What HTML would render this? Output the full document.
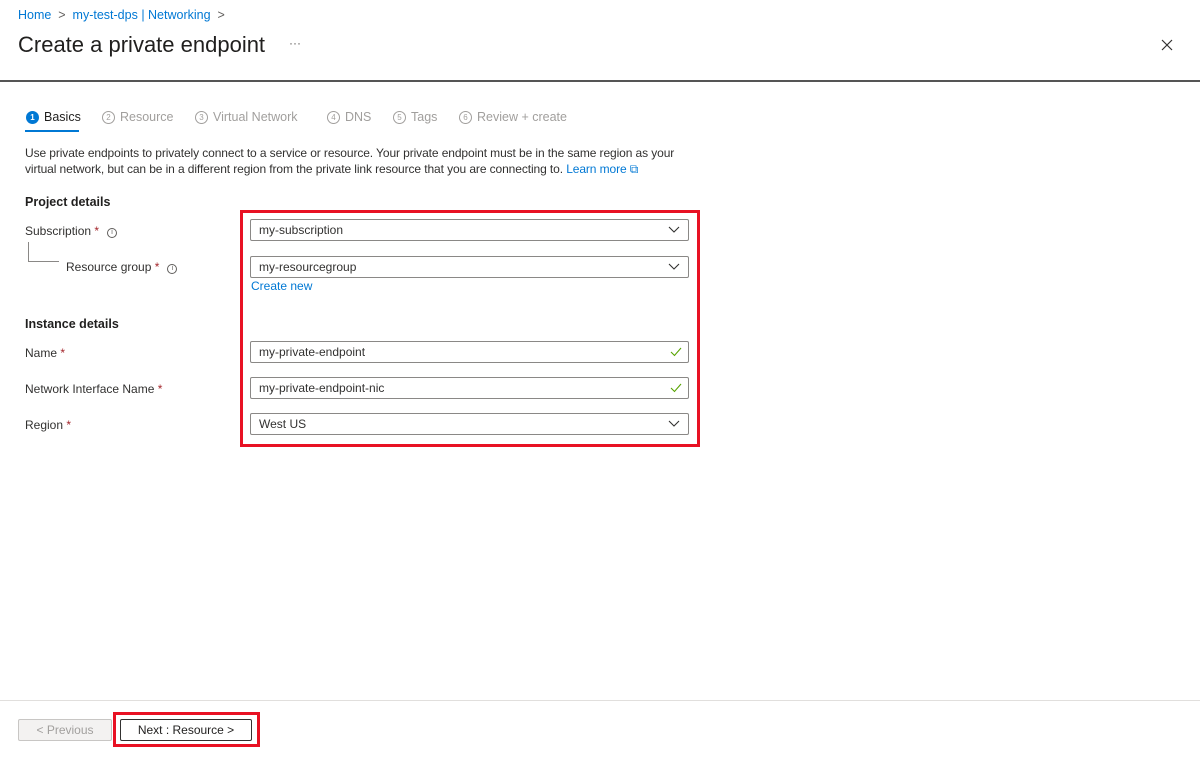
<!DOCTYPE html>
<html><head><style>
*{margin:0;padding:0;box-sizing:border-box}
body{width:1200px;height:763px;background:#fff;font-family:"Liberation Sans",sans-serif;color:#323130;position:relative;overflow:hidden;font-size:12px}
.a{position:absolute;white-space:nowrap}
.link{color:#0078d4}
.inp{position:absolute;left:250px;width:439px;height:22px;border:1px solid #8a8886;border-radius:2px;padding-left:8px;line-height:20px;font-size:12px}
.chev{position:absolute;right:8px;top:5px}
.chk{position:absolute;right:6px;top:4px}
.lbl{position:absolute;left:25px;font-size:12px}
.req{color:#a4262c}
.info{display:inline-block;width:10px;height:10px;border:1px solid #605e5c;border-radius:50%;font-size:7px;line-height:8px;text-align:center;color:#605e5c;vertical-align:1px;margin-left:8px}
.step{position:absolute;top:110px;color:#a19f9d;font-size:12.5px}
.num{display:inline-block;width:13px;height:13px;border:1px solid #a19f9d;border-radius:50%;font-size:8px;line-height:11px;text-align:center;vertical-align:1px;margin-right:5px}
</style></head><body>
<div class="a link" style="left:18px;top:8px;font-size:12.5px">Home <span style="color:#605e5c">&nbsp;&gt;&nbsp;</span> my-test-dps | Networking <span style="color:#605e5c">&nbsp;&gt;</span></div>
<div class="a" style="left:18px;top:32px;font-size:22px;color:#201f1e">Create a private endpoint</div>
<div class="a" style="left:289px;top:36px;font-size:12px;color:#605e5c">···</div>
<svg class="a" style="left:1161px;top:39px" width="12" height="12"><path d="M1 1L11 11M11 1L1 11" stroke="#323130" stroke-width="1.2"/></svg>
<div class="a" style="left:0;top:80px;width:1200px;height:2px;background:#555"></div>

<div class="step" style="left:26px;color:#201f1e"><span class="num" style="background:#0078d4;border-color:#0078d4;color:#fff;font-weight:bold">1</span>Basics</div>
<div class="a" style="left:25px;top:130px;width:54px;height:2px;background:#0078d4"></div>
<div class="step" style="left:102px"><span class="num">2</span>Resource</div>
<div class="step" style="left:195px"><span class="num">3</span>Virtual Network</div>
<div class="step" style="left:327px"><span class="num">4</span>DNS</div>
<div class="step" style="left:393px"><span class="num">5</span>Tags</div>
<div class="step" style="left:459px"><span class="num">6</span>Review + create</div>

<div class="a" style="left:25px;top:145px;font-size:12px;line-height:16px;letter-spacing:-0.1px">Use private endpoints to privately connect to a service or resource. Your private endpoint must be in the same region as your<br>virtual network, but can be in a different region from the private link resource that you are connecting to. <span class="link">Learn more ⧉</span></div>

<div class="a" style="left:25px;top:195px;font-size:12.5px;font-weight:bold;color:#201f1e">Project details</div>
<div class="lbl" style="top:224px">Subscription <span class="req">*</span><span class="info">i</span></div>
<div class="a" style="left:28px;top:242px;width:31px;height:20px;border-left:1px solid #8a8886;border-bottom:1px solid #8a8886"></div>
<div class="lbl" style="left:66px;top:260px">Resource group <span class="req">*</span><span class="info">i</span></div>

<div class="a" style="left:25px;top:317px;font-size:12.5px;font-weight:bold;color:#201f1e">Instance details</div>
<div class="lbl" style="top:346px">Name <span class="req">*</span></div>
<div class="lbl" style="top:382px">Network Interface Name <span class="req">*</span></div>
<div class="lbl" style="top:418px">Region <span class="req">*</span></div>

<div class="inp" style="top:219px">my-subscription<svg class="chev" width="12" height="10"><path d="M1 2L6 7L11 2" fill="none" stroke="#323130" stroke-width="1.1"/></svg></div>
<div class="inp" style="top:256px">my-resourcegroup<svg class="chev" width="12" height="10"><path d="M1 2L6 7L11 2" fill="none" stroke="#323130" stroke-width="1.1"/></svg></div>
<div class="a link" style="left:251px;top:279px">Create new</div>
<div class="inp" style="top:341px">my-private-endpoint<svg class="chk" width="12" height="12"><path d="M1 6L4.5 9.5L11 2" fill="none" stroke="#57a300" stroke-width="1.1"/></svg></div>
<div class="inp" style="top:377px">my-private-endpoint-nic<svg class="chk" width="12" height="12"><path d="M1 6L4.5 9.5L11 2" fill="none" stroke="#57a300" stroke-width="1.1"/></svg></div>
<div class="inp" style="top:413px">West US<svg class="chev" width="12" height="10"><path d="M1 2L6 7L11 2" fill="none" stroke="#323130" stroke-width="1.1"/></svg></div>
<div class="a" style="left:240px;top:210px;width:460px;height:237px;border:3px solid #e81123"></div>

<div class="a" style="left:0;top:700px;width:1200px;height:1px;background:#e1dfdd"></div>
<div class="a" style="left:18px;top:719px;width:94px;height:22px;border:1px solid #c8c6c4;background:#f3f2f1;color:#a19f9d;text-align:center;line-height:20px;border-radius:2px">&lt; Previous</div>
<div class="a" style="left:120px;top:719px;width:132px;height:22px;border:1px solid #323130;color:#201f1e;text-align:center;line-height:20px;border-radius:2px">Next : Resource &gt;</div>
<div class="a" style="left:113px;top:712px;width:147px;height:35px;border:3px solid #e81123"></div>
</body></html>
